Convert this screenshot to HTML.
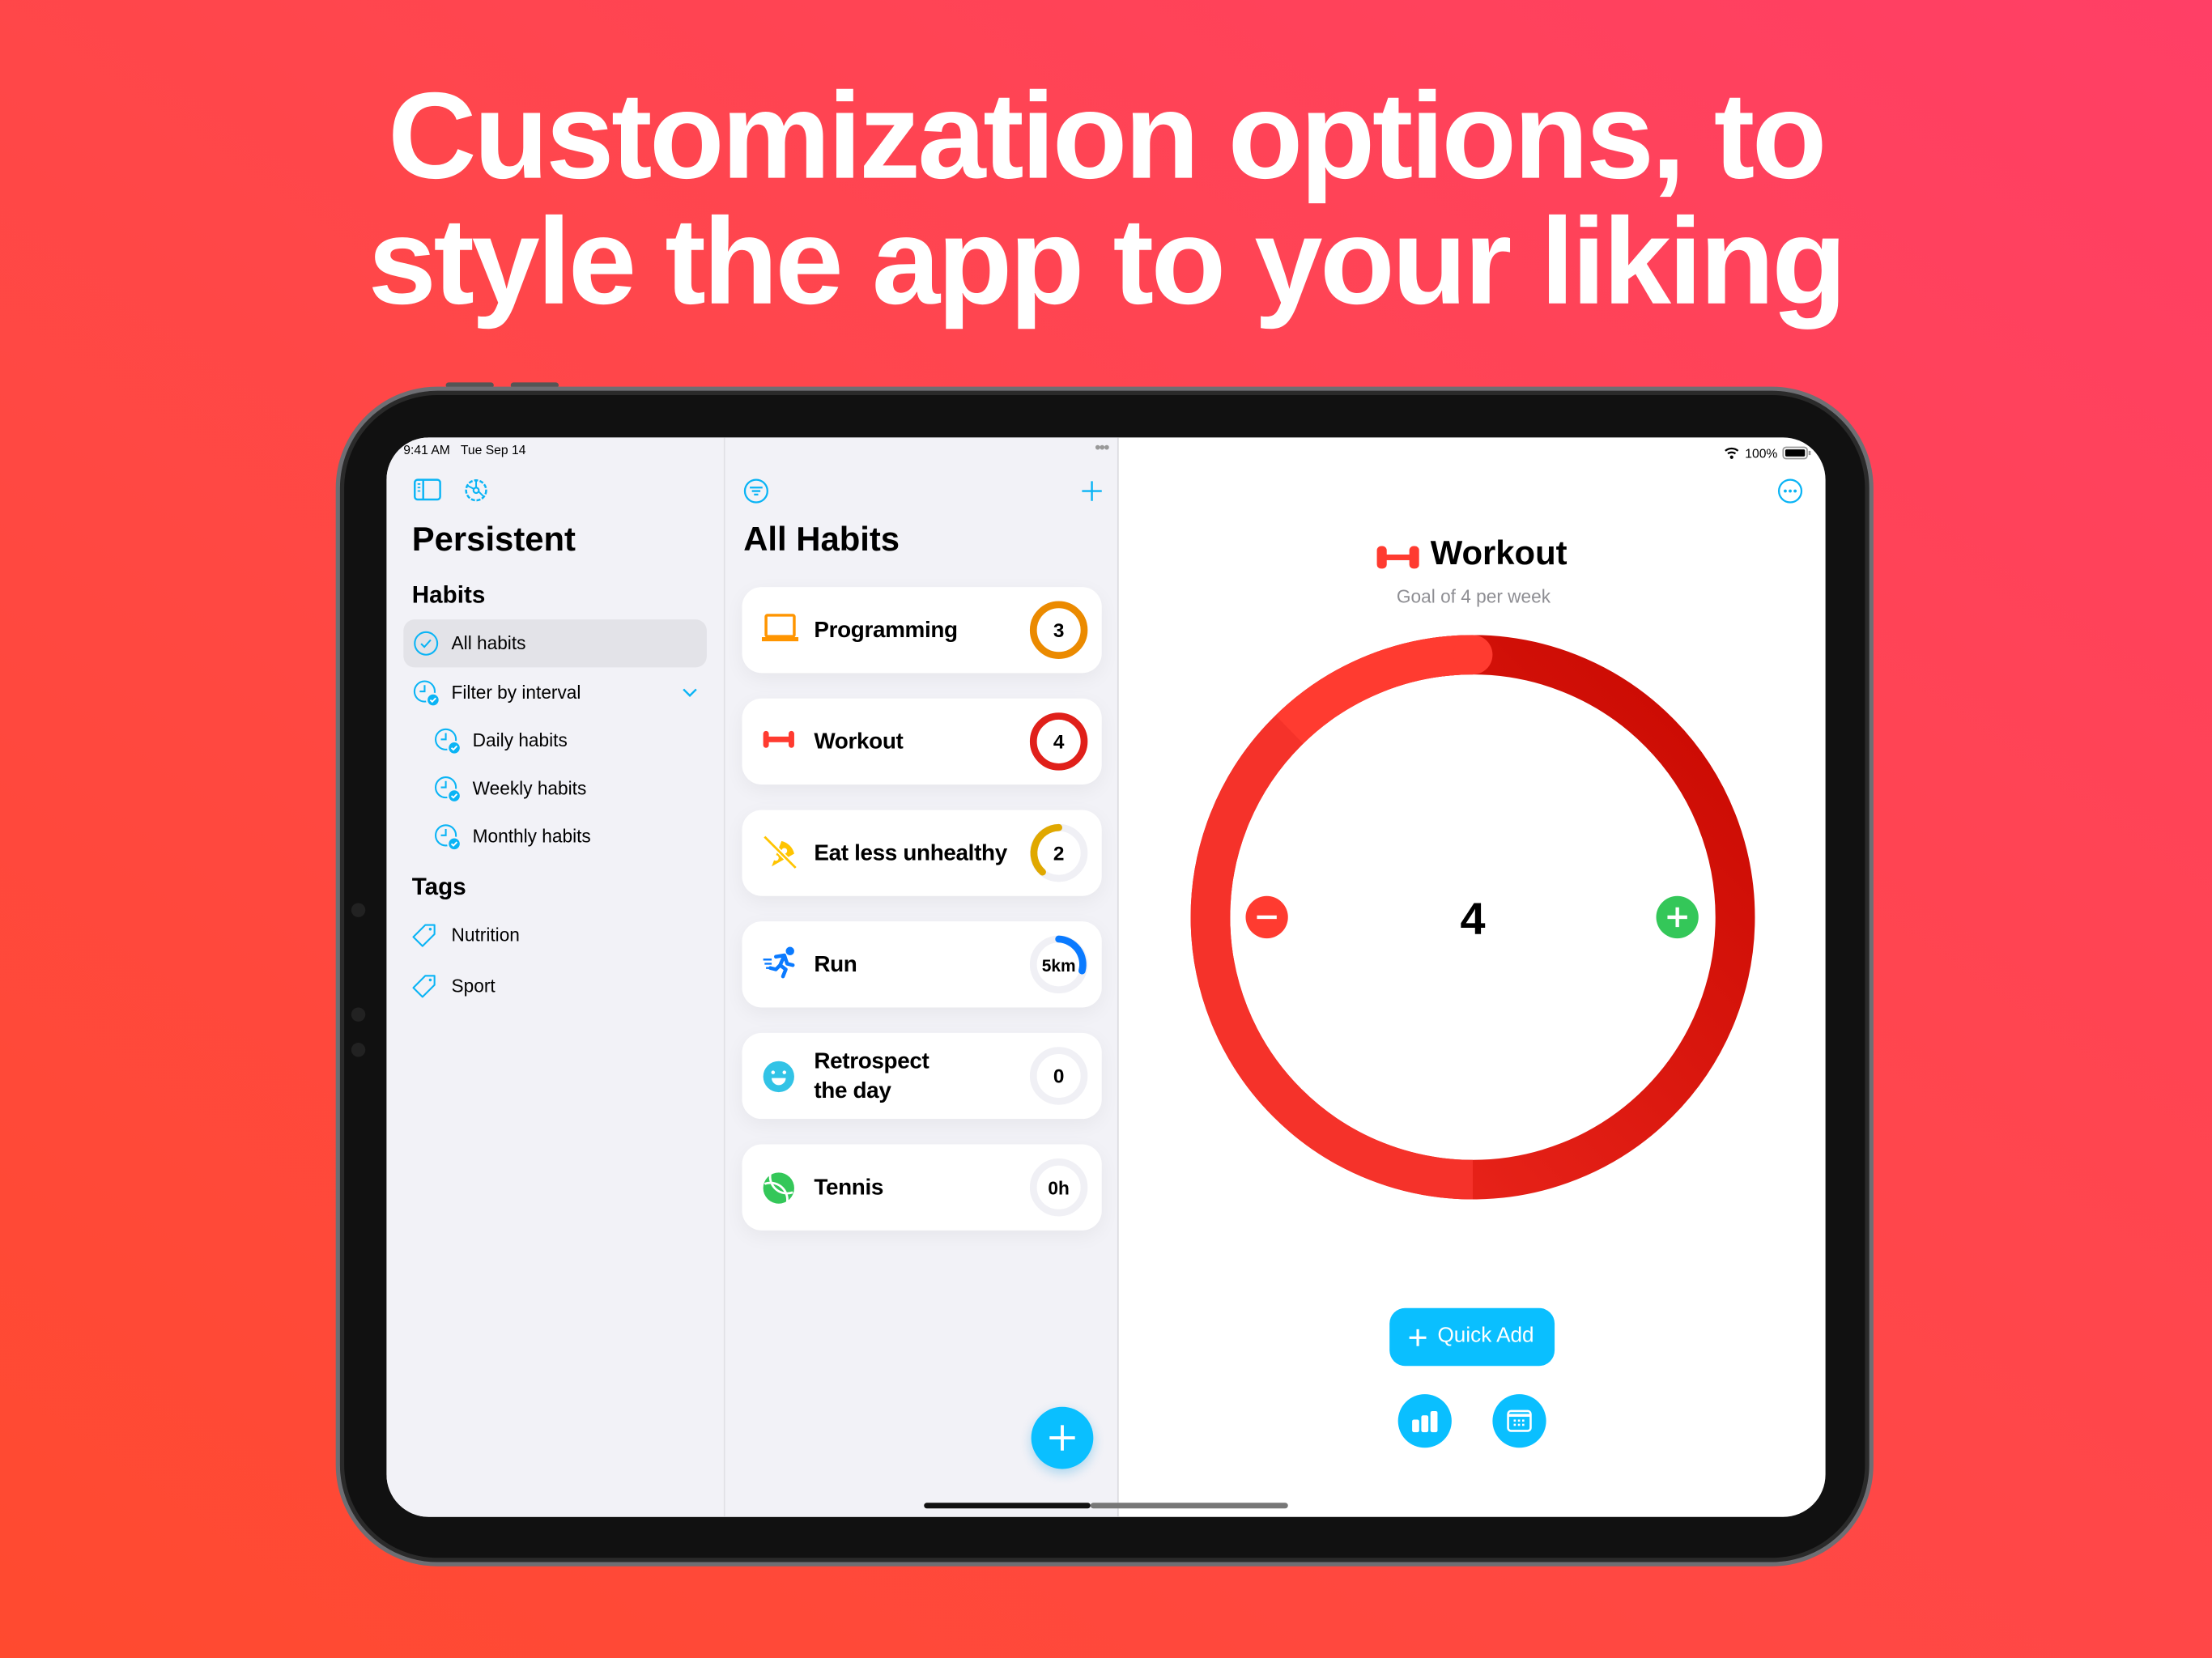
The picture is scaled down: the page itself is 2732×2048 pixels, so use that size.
<!DOCTYPE html>
<html><head><meta charset="utf-8">
<style>
*{margin:0;padding:0;box-sizing:border-box}
html,body{width:2732px;height:2048px;overflow:hidden}
body{background:linear-gradient(35deg,#ff4a2f 0%,#ff4748 50%,#ff3f66 100%);font-family:"Liberation Sans",sans-serif}
#w{position:absolute;left:0;top:0;width:1568px;height:1175px;transform:scale(1.74235,1.74298);transform-origin:0 0}
.a{position:absolute}
h1{position:absolute;left:0;width:1568px;text-align:center;color:#fff;font-size:87px;font-weight:700;letter-spacing:-2px;line-height:89px;top:52px}
.frame{left:238px;top:274px;width:1090px;height:836px;border-radius:72px;background:#111;border:3px solid #6e6e73;box-shadow:inset 0 0 0 3px #2a2a2a}
.screen{left:274px;top:310px;width:1020px;height:765px;border-radius:30px;overflow:hidden;background:#fff}
.side{left:0;top:0;width:239px;height:765px;background:#f2f2f7}
.mid{left:239px;top:0;width:280px;height:765px;background:#f2f2f7;border-left:1px solid #e0e0e5;border-right:1px solid #dcdce0}
.t{position:absolute;white-space:nowrap;color:#000}
.card{position:absolute;left:12px;width:255px;height:61px;background:#fff;border-radius:14px;box-shadow:0 4px 14px rgba(0,0,0,.05)}
.card .n{position:absolute;left:51px;top:50%;transform:translateY(-50%);font-size:16px;font-weight:700;line-height:21px;letter-spacing:-0.2px}
.card svg.r{position:absolute;left:203px;top:9px}
.card .ic{position:absolute;left:14px;top:18px}
.row{font-size:13px;color:#000}
</style></head><body><div id="w">
<h1>Customization options, to<br>style the app to your liking</h1>
<div class="a" style="left:316px;top:271px;width:34px;height:4px;background:#555;border-radius:2px"></div>
<div class="a" style="left:362px;top:271px;width:34px;height:4px;background:#555;border-radius:2px"></div>
<div class="a frame"></div>
<div class="a" style="left:249px;top:640px;width:10px;height:10px;border-radius:5px;background:#222"></div>
<div class="a" style="left:249px;top:714px;width:10px;height:10px;border-radius:5px;background:#222"></div>
<div class="a" style="left:249px;top:739px;width:10px;height:10px;border-radius:5px;background:#222"></div>
<div class="a screen">
 <div class="a side">
  <div class="t" style="left:12px;top:4px;font-size:9px">9:41 AM&nbsp;&nbsp;&nbsp;Tue Sep 14</div>
  <svg class="a" style="left:19px;top:29px" width="20" height="16" viewBox="0 0 20 16"><rect x="1" y="1" width="18" height="14" rx="2" fill="none" stroke="#0ab4f5" stroke-width="1.4"/><line x1="7" y1="1" x2="7" y2="15" stroke="#0ab4f5" stroke-width="1.4"/><path d="M3 4h2M3 6.5h2M3 9h2" stroke="#0ab4f5" stroke-width="1"/></svg>
  <svg class="a" style="left:54px;top:28px" width="19" height="19" viewBox="0 0 20 20"><circle cx="10" cy="10" r="7.5" fill="none" stroke="#0ab4f5" stroke-width="1.5" stroke-dasharray="3 1.2"/><circle cx="10" cy="10" r="2" fill="none" stroke="#0ab4f5" stroke-width="1.3"/><path d="M10 2.5V8M3.5 6.5l5 2.5M12 11l4 4" stroke="#0ab4f5" stroke-width="1.2"/></svg>
  <div class="t" style="left:18px;top:59px;font-size:24px;font-weight:700">Persistent</div>
  <div class="t" style="left:18px;top:102px;font-size:17px;font-weight:700">Habits</div>
  <div class="a" style="left:12px;top:129px;width:215px;height:34px;background:#e3e3e8;border-radius:8px"></div>
  <svg class="a" style="left:19px;top:137px" width="18" height="18" viewBox="0 0 18 18"><circle cx="9" cy="9" r="8" fill="none" stroke="#0ab4f5" stroke-width="1.2"/><path d="M5.5 9.2l2.3 2.3 4.5-5" fill="none" stroke="#0ab4f5" stroke-width="1.2"/></svg>
  <div class="t row" style="left:46px;top:138px">All habits</div>
  <svg width="0" height="0"><defs><g id="clk"><circle cx="8" cy="8" r="7.2" fill="none" stroke="#0ab4f5" stroke-width="1.2"/><path d="M8 3.5V8H4.5" fill="none" stroke="#0ab4f5" stroke-width="1.2"/><circle cx="14" cy="14" r="4.5" fill="#0ab4f5" stroke="#f2f2f7" stroke-width="1.2"/><path d="M12 14l1.4 1.3 2.5-2.6" fill="none" stroke="#fff" stroke-width="1.1"/></g>
  <g id="tag"><path d="M9.5 1.5h6.5v6.5l-8.5 8.5-6.5-6.5z" fill="none" stroke="#0ab4f5" stroke-width="1.2" stroke-linejoin="round"/><circle cx="13" cy="4.5" r="1" fill="#0ab4f5"/></g></defs></svg>
  <svg class="a" style="left:19px;top:172px" width="20" height="20"><use href="#clk"/></svg>
  <div class="t row" style="left:46px;top:173px">Filter by interval</div>
  <svg class="a" style="left:209px;top:177px" width="12" height="8"><path d="M1.5 1.5l4.5 4.5 4.5-4.5" fill="none" stroke="#0ab4f5" stroke-width="1.4"/></svg>
  <svg class="a" style="left:34px;top:206px" width="20" height="20"><use href="#clk"/></svg>
  <div class="t row" style="left:61px;top:207px">Daily habits</div>
  <svg class="a" style="left:34px;top:240px" width="20" height="20"><use href="#clk"/></svg>
  <div class="t row" style="left:61px;top:241px">Weekly habits</div>
  <svg class="a" style="left:34px;top:274px" width="20" height="20"><use href="#clk"/></svg>
  <div class="t row" style="left:61px;top:275px">Monthly habits</div>
  <div class="t" style="left:18px;top:309px;font-size:17px;font-weight:700">Tags</div>
  <svg class="a" style="left:18px;top:344px" width="18" height="18"><use href="#tag"/></svg>
  <div class="t row" style="left:46px;top:345px">Nutrition</div>
  <svg class="a" style="left:18px;top:380px" width="18" height="18"><use href="#tag"/></svg>
  <div class="t row" style="left:46px;top:381px">Sport</div>
 </div>
 <div class="a mid">
  <div class="t" style="left:262px;top:0px;font-size:12px;color:#999;letter-spacing:-1px">•••</div>
  <svg class="a" style="left:13px;top:29px" width="18" height="18" viewBox="0 0 18 18"><circle cx="9" cy="9" r="8" fill="none" stroke="#0ab4f5" stroke-width="1.3"/><path d="M4.5 6.5h9M6 9h6M7.5 11.5h3" stroke="#0ab4f5" stroke-width="1.3"/></svg>
  <svg class="a" style="left:252px;top:30px" width="16" height="16"><path d="M8 1v14M1 8h14" stroke="#0ab4f5" stroke-width="1.4"/></svg>
  <div class="t" style="left:13px;top:59px;font-size:24px;font-weight:700">All Habits</div>

  <div class="card" style="top:106px">
   <svg class="ic" width="26" height="22" viewBox="0 0 26 22"><rect x="3" y="2" width="20" height="15" rx="1" fill="none" stroke="#ff9500" stroke-width="2"/><path d="M0 19h26" stroke="#ff9500" stroke-width="3"/></svg>
   <div class="n">Programming</div>
   <svg class="r" width="43" height="43" viewBox="0 0 43 43"><circle cx="21.5" cy="21.5" r="18" fill="none" stroke="#eb8a00" stroke-width="5"/><text x="21.5" y="26.5" text-anchor="middle" font-family="Liberation Sans" font-weight="700" font-size="14">3</text></svg>
  </div>
  <div class="card" style="top:185px">
   <svg class="ic" width="24" height="22" viewBox="0 0 24 22"><rect x="1" y="5" width="4" height="12" rx="2" fill="#ff3b30"/><rect x="19" y="5" width="4" height="12" rx="2" fill="#ff3b30"/><rect x="4" y="9" width="16" height="4" fill="#ff3b30"/></svg>
   <div class="n">Workout</div>
   <svg class="r" width="43" height="43" viewBox="0 0 43 43"><circle cx="21.5" cy="21.5" r="18" fill="none" stroke="#e0201a" stroke-width="5"/><text x="21.5" y="26.5" text-anchor="middle" font-family="Liberation Sans" font-weight="700" font-size="14">4</text></svg>
  </div>
  <div class="card" style="top:264px">
   <svg class="ic" width="26" height="26" viewBox="0 0 26 26" style="top:17px"><path d="M7 23L14 5a12 12 0 0 1 9 9z" fill="#ffc400"/><circle cx="10" cy="17" r="2" fill="#fff"/><circle cx="16" cy="12" r="2" fill="#fff"/><path d="M2 2l22 22" stroke="#fff" stroke-width="3.5"/><path d="M2 2l22 22" stroke="#ffc400" stroke-width="1.6"/></svg>
   <div class="n">Eat less unhealthy</div>
   <svg class="r" width="43" height="43" viewBox="0 0 43 43"><circle cx="21.5" cy="21.5" r="18" fill="none" stroke="#f0f0f5" stroke-width="5"/><path d="M21.5 3.5A18 18 0 0 0 10 35" fill="none" stroke="#e0a800" stroke-width="5" stroke-linecap="round"/><text x="21.5" y="26.5" text-anchor="middle" font-family="Liberation Sans" font-weight="700" font-size="14">2</text></svg>
  </div>
  <div class="card" style="top:343px">
   <svg class="ic" width="26" height="26" viewBox="0 0 26 26" style="top:17px"><circle cx="20" cy="4" r="3" fill="#0a7aff"/><path d="M10 8l6-1 2 6 4 1M16 7l-3 7 4 3-2 5M13 14l-3 3-4-1" fill="none" stroke="#0a7aff" stroke-width="2.6" stroke-linecap="round" stroke-linejoin="round"/><path d="M1 10h6M2 13h5M3 16h4" stroke="#0a7aff" stroke-width="1.4"/></svg>
   <div class="n">Run</div>
   <svg class="r" width="43" height="43" viewBox="0 0 43 43"><circle cx="21.5" cy="21.5" r="18" fill="none" stroke="#f0f0f5" stroke-width="5"/><path d="M21.5 3.5A18 18 0 0 1 38 26" fill="none" stroke="#0a7aff" stroke-width="5" stroke-linecap="round"/><text x="21.5" y="26.5" text-anchor="middle" font-family="Liberation Sans" font-weight="700" font-size="12">5km</text></svg>
  </div>
  <div class="card" style="top:422px">
   <svg class="ic" width="24" height="24" viewBox="0 0 24 24" style="top:19px"><circle cx="12" cy="12" r="11" fill="#32c3e6"/><circle cx="8" cy="9" r="1.3" fill="#fff"/><circle cx="16" cy="9" r="1.3" fill="#fff"/><path d="M7 13h10a5 5 0 0 1-10 0z" fill="#fff"/></svg>
   <div class="n">Retrospect<br>the day</div>
   <svg class="r" width="43" height="43" viewBox="0 0 43 43"><circle cx="21.5" cy="21.5" r="18" fill="none" stroke="#f0f0f5" stroke-width="5"/><text x="21.5" y="26.5" text-anchor="middle" font-family="Liberation Sans" font-weight="700" font-size="14">0</text></svg>
  </div>
  <div class="card" style="top:501px">
   <svg class="ic" width="24" height="24" viewBox="0 0 24 24" style="top:19px"><circle cx="12" cy="12" r="11" fill="#34c759"/><path d="M6 2a12 12 0 0 0 16 13M2 9a12 12 0 0 1 16 13" fill="none" stroke="#fff" stroke-width="1.6"/></svg>
   <div class="n">Tennis</div>
   <svg class="r" width="43" height="43" viewBox="0 0 43 43"><circle cx="21.5" cy="21.5" r="18" fill="none" stroke="#f0f0f5" stroke-width="5"/><text x="21.5" y="26.5" text-anchor="middle" font-family="Liberation Sans" font-weight="700" font-size="13">0h</text></svg>
  </div>
  <div class="a" style="left:217px;top:687px;width:44px;height:44px;border-radius:22px;background:#0abfff;box-shadow:0 3px 8px rgba(0,150,220,.3)"></div>
  <svg class="a" style="left:229px;top:699px" width="20" height="20"><path d="M10 1v18M1 10h18" stroke="#fff" stroke-width="2.2"/></svg>
 </div>
 <svg class="a" style="left:946px;top:5px" width="70" height="12" viewBox="0 0 70 12"><path d="M3 4.5a7 7 0 0 1 9 0M4.8 6.5a4.5 4.5 0 0 1 5.4 0" fill="none" stroke="#000" stroke-width="1.3"/><circle cx="7.5" cy="9" r="1.2"/><text x="17" y="9.5" font-family="Liberation Sans" font-size="9">100%</text><rect x="44" y="2" width="17" height="8" rx="2" fill="none" stroke="#999"/><rect x="45.5" y="3.5" width="14" height="5" rx="1"/><rect x="62" y="4.5" width="1.5" height="3" fill="#999"/></svg>
 <svg class="a" style="left:986px;top:29px" width="18" height="18" viewBox="0 0 18 18"><circle cx="9" cy="9" r="8" fill="none" stroke="#0ab4f5" stroke-width="1.3"/><circle cx="5.5" cy="9" r="1.1" fill="#0ab4f5"/><circle cx="9" cy="9" r="1.1" fill="#0ab4f5"/><circle cx="12.5" cy="9" r="1.1" fill="#0ab4f5"/></svg>
 <svg class="a" style="left:702px;top:74px" width="30" height="22" viewBox="0 0 30 22"><rect x="0" y="3" width="7" height="16" rx="3" fill="#ff3b30"/><rect x="23" y="3" width="7" height="16" rx="3" fill="#ff3b30"/><rect x="6" y="9" width="18" height="4" fill="#ff3b30"/></svg>
 <div class="t" style="left:740px;top:69px;font-size:24px;font-weight:700">Workout</div>
 <div class="t" style="left:716px;top:105px;font-size:13px;color:#8e8e93">Goal of 4 per week</div>
 <svg class="a" style="left:570px;top:140px" width="400" height="400" viewBox="0 0 400 400">
  <defs><linearGradient id="g1" x1="1" y1="0" x2="0" y2="1"><stop offset="0" stop-color="#c80800"/><stop offset="1" stop-color="#f02a20"/></linearGradient></defs>
  <circle cx="200" cy="200" r="186" fill="none" stroke="url(#g1)" stroke-width="28"/>
  <path d="M200 14A186 186 0 0 0 14 200A186 186 0 0 0 200 386" fill="none" stroke="#f5322a" stroke-width="28"/>
  <path d="M70 67A186 186 0 0 1 200 14" fill="none" stroke="#ff3b30" stroke-width="28"/>
  <circle cx="200" cy="14" r="14" fill="#ff3b30"/>
  <circle cx="54" cy="200" r="15" fill="#ff3b30"/><path d="M47 200h14" stroke="#fff" stroke-width="2.5"/>
  <circle cx="345" cy="200" r="15" fill="#34c759"/><path d="M338 200h14M345 193v14" stroke="#fff" stroke-width="2.5"/>
  <text x="200" y="212" text-anchor="middle" font-family="Liberation Sans" font-weight="700" font-size="32">4</text>
 </svg>
 <div class="a" style="left:711px;top:617px;width:117px;height:41px;border-radius:11px;background:#0abfff"></div>
 <svg class="a" style="left:724px;top:631px" width="14" height="14"><path d="M7 1v12M1 7h12" stroke="#fff" stroke-width="1.8"/></svg>
 <div class="t" style="left:745px;top:628px;font-size:15px;color:#fff">Quick Add</div>
 <div class="a" style="left:717px;top:678px;width:38px;height:38px;border-radius:19px;background:#0abfff"></div>
 <svg class="a" style="left:726px;top:687px" width="20" height="20"><rect x="1" y="9" width="5" height="9" rx="1.3" fill="#fff"/><rect x="7.5" y="6" width="5" height="12" rx="1.3" fill="#fff"/><rect x="14" y="3" width="5" height="15" rx="1.3" fill="#fff"/></svg>
 <div class="a" style="left:784px;top:678px;width:38px;height:38px;border-radius:19px;background:#0abfff"></div>
 <svg class="a" style="left:793px;top:687px" width="20" height="20"><rect x="2" y="3" width="16" height="14" rx="2" fill="none" stroke="#fff" stroke-width="1.5"/><path d="M2 6h16" stroke="#fff" stroke-width="2"/><g fill="#fff"><rect x="6" y="9" width="1.5" height="1.5"/><rect x="9" y="9" width="1.5" height="1.5"/><rect x="12" y="9" width="1.5" height="1.5"/><rect x="6" y="12" width="1.5" height="1.5"/><rect x="9" y="12" width="1.5" height="1.5"/><rect x="12" y="12" width="1.5" height="1.5"/></g></svg>
 <div class="a" style="left:381px;top:755px;width:118px;height:4px;border-radius:2px;background:#111"></div>
 <div class="a" style="left:499px;top:755px;width:140px;height:4px;border-radius:2px;background:#777"></div>
</div>
</div></body></html>
